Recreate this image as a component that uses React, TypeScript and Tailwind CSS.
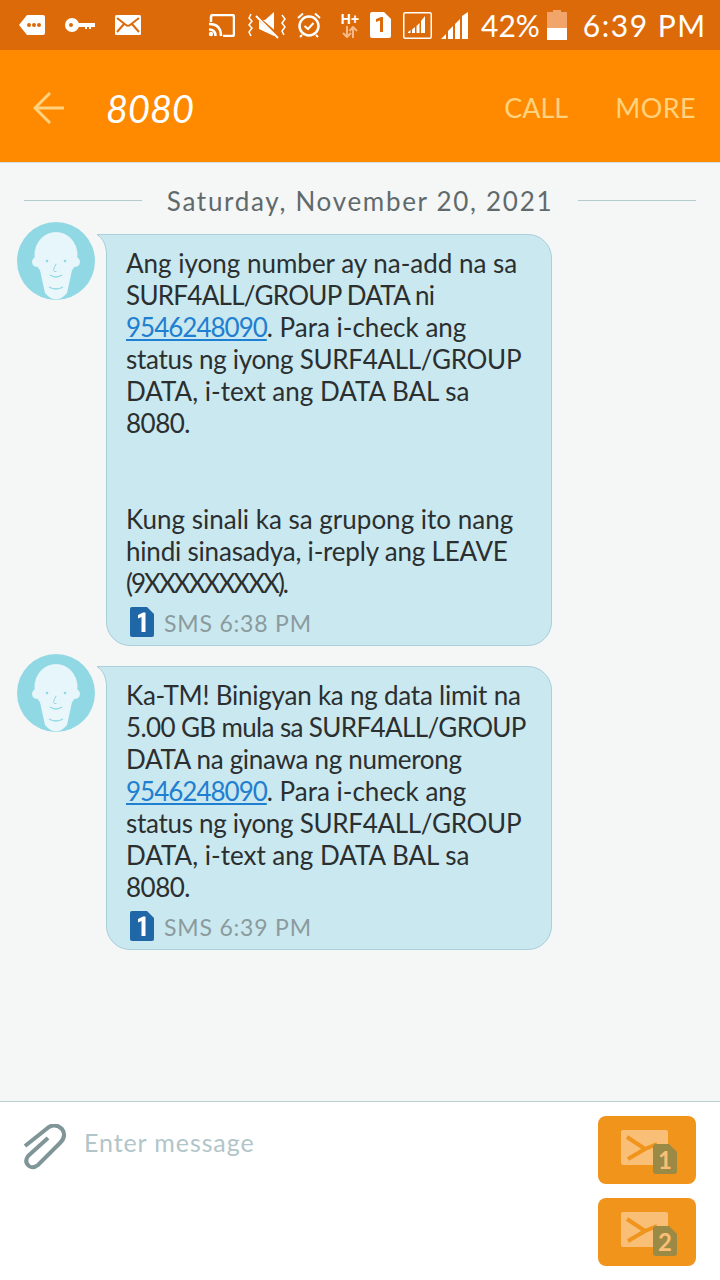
const Line = ({ children }: { children?: React.ReactNode }) => (
  <div className="h-8 whitespace-nowrap">{children}</div>
);

const SimBadge = () => (
  <svg width="24" height="30" viewBox="0 0 24 30" className="shrink-0">
    <path d="M2 0H17L24 7V28Q24 30 22 30H2Q0 30 0 28V2Q0 0 2 0Z" fill="#2067a8" />
    <path d="M8 8L13 5.5H15.5V25H11.5V10L8 11.5Z" fill="#fff" />
  </svg>
);

const Avatar = () => (
  <svg width="78" height="78" viewBox="0 0 78 78" className="shrink-0 overflow-visible">
    <circle cx="39" cy="39" r="39" fill="#91d8e5" />
    <path d="M23 48L28 71Q39 84 50 71L55 48Z" fill="#eaf7fa" />
    <ellipse cx="39" cy="33" rx="21.5" ry="23" fill="#e6f6fa" />
    <circle cx="20" cy="40" r="5" fill="#e6f6fa" />
    <circle cx="58" cy="40" r="5" fill="#e6f6fa" />
    <circle cx="30" cy="39" r="1.3" fill="#91d8e5" />
    <circle cx="48" cy="39" r="1.3" fill="#91d8e5" />
    <path d="M39 42Q36.5 47 36.5 48.5Q37 50 39.5 49.5" fill="none" stroke="#91d8e5" strokeWidth="1" />
    <path d="M33 53Q39 57 45 53" fill="none" stroke="#91d8e5" strokeWidth="1.3" />
    <path d="M32 65Q39 69 46 65" fill="none" stroke="#91d8e5" strokeWidth="1.3" />
  </svg>
);

const Bubble = ({ lines, time }: { lines: React.ReactNode[]; time: string }) => (
  <div className="flex items-start pl-[17px]">
    <Avatar />
    <div className="relative ml-[11px] mt-3 w-[446px] rounded-[24px] rounded-tl-none border border-[#a9cfd8] bg-[#cae8ef] pl-[19px] pr-2 pt-[12px] pb-[7px] text-[26px] leading-8 text-[#2b2f30]">
      <svg width="11" height="18" viewBox="0 0 11 18" className="absolute left-[-10px] top-[-1px]">
        <path d="M0 0.5H11V18H9.5Q8 5 0 0.5Z" fill="#cae8ef" />
        <path d="M11 0.5H0Q8 5 9.5 18" fill="none" stroke="#a9cfd8" strokeWidth="1" />
      </svg>
      {lines.map((l, i) => (
        <Line key={i}>{l}</Line>
      ))}
      <div className="mt-[7px] flex items-center gap-[10px] pl-1 text-[23px] leading-[30px] tracking-[0.8px] text-[#8b9a9d]">
        <SimBadge />
        <span className="pt-[2px]">SMS {time}</span>
      </div>
    </div>
  </div>
);

const PhoneLink = () => <span className="tracking-[-1px] text-[#1f7fd1] underline">9546248090</span>;

const SendButton = ({ n }: { n: string }) => (
  <button className="relative h-[68px] w-[98px] rounded-lg bg-[#f0941b]">
    <svg width="48" height="36" viewBox="0 0 48 36" className="absolute left-[23px] top-[14px]">
      <rect width="47" height="35" rx="2" fill="#f9bf77" />
      <path d="M6 7L24 19L36 14M24 19L7 29" fill="none" stroke="#f0941b" strokeWidth="4" />
    </svg>
    <svg width="24" height="30" viewBox="0 0 24 30" className="absolute left-[55px] top-[28px]">
      <path d="M3 0H16L24 8V27Q24 30 21 30H3Q0 30 0 27V3Q0 0 3 0Z" fill="#9a8a45" />
    </svg>
    <span className="absolute left-[55px] top-[28px] w-6 text-center text-[24px] font-bold leading-[32px] text-[#f9bf77]">{n}</span>
  </button>
);

const StatusIcons = () => (
  <>
    <svg width="28" height="22" viewBox="0 0 28 22" className="ml-[18px]">
      <path d="M9 1H25Q27 1 27 3V19Q27 21 25 21H9L1 11Z" fill="#fff" />
      <circle cx="11" cy="11" r="2" fill="#dd6a08" /><circle cx="16" cy="11" r="2" fill="#dd6a08" /><circle cx="21" cy="11" r="2" fill="#dd6a08" />
    </svg>
    <svg width="30" height="16" viewBox="0 0 30 16" className="ml-[19px]">
      <circle cx="7" cy="8" r="7" fill="#fff" />
      <circle cx="6" cy="8" r="2" fill="#dd6a08" />
      <path d="M13 6H30V10H26V12H24V10H22V12H20V10H13Z" fill="#fff" />
    </svg>
    <svg width="26" height="20" viewBox="0 0 26 20" className="ml-[20px]">
      <rect width="26" height="20" rx="1.5" fill="#fff" />
      <path d="M2 3L11 10Q13 11.5 15 10L24 3M2 17L9 9M24 17L17 9" fill="none" stroke="#dd6a08" strokeWidth="2" />
    </svg>
    <svg width="27" height="23" viewBox="0 0 27 23" className="ml-[67px]">
      <path d="M3 8V3Q3 1 5 1H24Q26 1 26 3V20Q26 22 24 22H15" fill="none" stroke="#fff" strokeWidth="2.5" />
      <path d="M1 10Q13 10 13 22M1 15.5Q7.5 15.5 7.5 22" fill="none" stroke="#fff" strokeWidth="2.5" />
      <circle cx="3" cy="20" r="2.2" fill="#fff" />
    </svg>
    <svg width="38" height="28" viewBox="0 0 38 28" className="ml-[13px]">
      <path d="M11 9H17L26 1V25L11 18Z" fill="#fff" />
      <path d="M8 5L33 27" stroke="#dd6a08" strokeWidth="3" />
      <path d="M8 5L30 27" stroke="#fff" strokeWidth="2" />
      <path d="M3 3L1 7L4 10L1 14L4 17L1 21L3 25M34 4L37 8L34 12L37 16L34 20L36 24" fill="none" stroke="#fff" strokeWidth="1.5" />
    </svg>
    <svg width="24" height="26" viewBox="0 0 24 26" className="ml-[11px]">
      <circle cx="12" cy="14" r="9.5" fill="none" stroke="#fff" strokeWidth="2.5" />
      <path d="M1 6L6 1.5M23 6L18 1.5M5 23L3 25M19 23L21 25" fill="none" stroke="#fff" strokeWidth="2" />
      <path d="M7.5 14L11 17L16.5 11" fill="none" stroke="#fff" strokeWidth="2" />
    </svg>
    <div className="ml-[19px] flex w-5 flex-col items-center font-['Liberation_Sans',sans-serif] font-bold leading-none">
      <span className="text-[14px] text-white">H+</span>
      <svg width="16" height="12" viewBox="0 0 16 12">
        <path d="M5 0V10M1 7L5 11L9 7" fill="none" stroke="#f5b98a" strokeWidth="2" />
        <path d="M11 12V2M7.5 5L11 1L15 5" fill="none" stroke="#f5b98a" strokeWidth="2" />
      </svg>
    </div>
    <svg width="21" height="26" viewBox="0 0 21 26" className="ml-[10px]">
      <path d="M2 0H14L21 7V24Q21 26 19 26H2Q0 26 0 24V2Q0 0 2 0Z" fill="#fff" />
      <path d="M6 7L11 5H13V20H10V8.5L6 10Z" fill="#dd6a08" />
    </svg>
    <svg width="29" height="27" viewBox="0 0 29 27" className="ml-3">
      <rect x="0.75" y="0.75" width="27.5" height="25.5" rx="1.5" fill="none" stroke="#fff" strokeWidth="1.5" />
      <path d="M5 21H7.5V18L5 20ZM9 21H12V15L9 17.5ZM13.5 21H16.5V11L13.5 14ZM18 21H22V4L18 9Z" fill="#fff" />
    </svg>
    <svg width="27" height="27" viewBox="0 0 27 27" className="ml-[9px]">
      <path d="M0 27L5 22V27ZM7 27V19L12 14V27ZM14 27V12L19 7V27ZM21 27V4L27 0V27Z" fill="#fff" />
    </svg>
    <span className="ml-[13px] text-[30px] leading-none text-white">42%</span>
    <div className="ml-[7px] flex h-[30px] w-5 flex-col items-center">
      <div className="h-[2px] w-2 bg-[#f2a56b]" />
      <div className="h-4 w-5 bg-[#f2a56b]" />
      <div className="h-3 w-5 bg-white" />
    </div>
    <span className="ml-4 whitespace-nowrap text-[30px] leading-none tracking-[1.5px] text-white">6:39 PM</span>
  </>
);

export default function App() {
  return (
    <div className="flex h-[1280px] w-[720px] flex-col overflow-hidden bg-[#f5f6f6] font-['Lato',sans-serif]">
      <div className="flex h-[50px] shrink-0 items-center bg-[#dd6a08]">
        <StatusIcons />
      </div>

      <div className="flex h-[112px] shrink-0 items-center bg-[#ff8a00] pt-1">
        <svg width="32" height="34" viewBox="0 0 32 34" className="ml-[33px]">
          <path d="M31 17H3M17 2L2 17L17 32" fill="none" stroke="#ffd27f" strokeWidth="3" />
        </svg>
        <span className="ml-[41px] text-[38px] italic text-white">8080</span>
        <span className="ml-auto text-[27px] text-[#ffd27f]">CALL</span>
        <span className="ml-[47px] mr-[24px] text-[27px] tracking-[0.4px] text-[#ffd27f]">MORE</span>
      </div>

      <div className="flex-1 border-t border-[#cfe0e3]">
        <div className="flex h-[74px] items-center px-6">
          <div className="h-px w-[118px] bg-[#b4cbd0]" />
          <span className="mx-auto whitespace-nowrap pt-[2px] text-[26px] tracking-[1.7px] text-[#5f6a6c]">Saturday, November 20, 2021</span>
          <div className="h-px w-[118px] bg-[#b4cbd0]" />
        </div>
        <div className="-mt-[15px] flex flex-col gap-[8px]">
          <Bubble
            time="6:38 PM"
            lines={[
              "Ang iyong number ay na-add na sa",
              <span className="tracking-[-0.73px]">SURF4ALL/GROUP DATA ni</span>,
              <><PhoneLink />. Para i-check ang</>,
              <span className="tracking-[-0.3px]">status ng iyong SURF4ALL/GROUP</span>,
              "DATA, i-text ang DATA BAL sa",
              <span className="tracking-[-0.5px]">8080.</span>,
              "",
              "",
              "Kung sinali ka sa grupong ito nang",
              <span className="tracking-[-0.2px]">hindi sinasadya, i-reply ang LEAVE</span>,
              <span className="tracking-[-2px]">(9XXXXXXXXX).</span>,
            ]}
          />
          <Bubble
            time="6:39 PM"
            lines={[
              <span className="tracking-[-0.23px]">Ka-TM! Binigyan ka ng data limit na</span>,
              <span className="tracking-[-0.63px]">5.00 GB mula sa SURF4ALL/GROUP</span>,
              <span className="tracking-[-0.3px]">DATA na ginawa ng numerong</span>,
              <><PhoneLink />. Para i-check ang</>,
              <span className="tracking-[-0.3px]">status ng iyong SURF4ALL/GROUP</span>,
              "DATA, i-text ang DATA BAL sa",
              <span className="tracking-[-0.5px]">8080.</span>,
            ]}
          />
        </div>
      </div>

      <div className="flex h-[179px] shrink-0 border-t border-[#b9d0d4] bg-white">
        <svg width="44" height="46" viewBox="0 0 44 46" className="ml-[23px] mt-[22px]">
          <path d="M2 22L26 3Q33 -1 39 5Q44 12 37 19L15 41Q10 45 6 42Q1 38 5 32L25 14" fill="none" stroke="#7f9597" strokeWidth="4" />
        </svg>
        <span className="ml-[17px] mt-[22px] h-9 text-[25px] leading-9 tracking-[0.9px] text-[#b2c5c8]">Enter message</span>
        <div className="ml-auto mr-6 mt-[14px] flex flex-col gap-[14px]">
          <SendButton n="1" />
          <SendButton n="2" />
        </div>
      </div>
    </div>
  );
}
